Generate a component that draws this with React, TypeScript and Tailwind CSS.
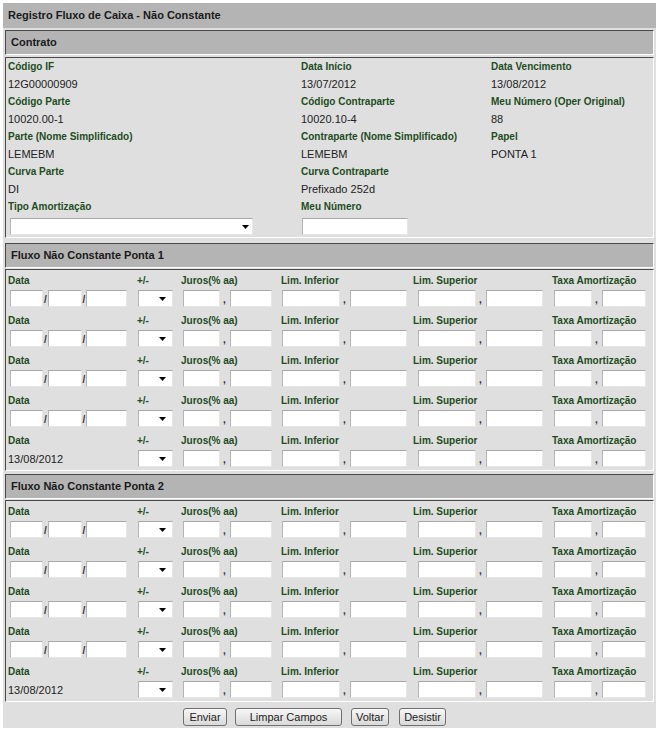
import type { ReactNode } from 'react'

// Registro Fluxo de Caixa - Não Constante (legacy form screen)

const contrato: [string, string][][] = [
  [
    ['Código IF', '12G00000909'],
    ['Data Início', '13/07/2012'],
    ['Data Vencimento', '13/08/2012'],
  ],
  [
    ['Código Parte', '10020.00-1'],
    ['Código Contraparte', '10020.10-4'],
    ['Meu Número (Oper Original)', '88'],
  ],
  [
    ['Parte (Nome Simplificado)', 'LEMEBM'],
    ['Contraparte (Nome Simplificado)', 'LEMEBM'],
    ['Papel', 'PONTA 1'],
  ],
  [
    ['Curva Parte', 'DI'],
    ['Curva Contraparte', 'Prefixado 252d'],
    ['', ''],
  ],
]

function SectionHeader({ children }: { children: ReactNode }) {
  return <div className={HEADER}>{children}</div>
}

function Field({ w }: { w: string }) {
  return <input type="text" className={`${INPUT} ${w}`} />
}

function Select({ w, pr }: { w: string; pr: string }) {
  return (
    <div className={`${INPUT} ${w} ${pr} flex items-center justify-end`}>
      <svg width="7" height="4" viewBox="0 0 7 4">
        <path d="M0 0h7L3.5 4z" fill="#000" />
      </svg>
    </div>
  )
}

function Comma() {
  return <span className={COMMA}>,</span>
}

function Slash({ w }: { w: string }) {
  return <span className={`${SLASH} ${w}`}>/</span>
}

function FluxRow({ last }: { last?: boolean }) {
  return (
    <div className="flex h-[40px] pt-[2px]">
      <div className="w-[129px]">
        <p className={LABEL}>Data</p>
        {last ? (
          <p className={`${VALUE} h-[17px] leading-[17px]`}>13/08/2012</p>
        ) : (
          <div className="ml-[2px] flex">
            <Field w="w-[33px]" />
            <Slash w="w-[5px]" />
            <Field w="w-[34px]" />
            <Slash w="w-[4px]" />
            <Field w="w-[41px]" />
          </div>
        )}
      </div>
      <div className="w-[44px]">
        <p className={LABEL}>+/-</p>
        <div className="ml-[1px]">
          <Select w="w-[35px]" pr="pr-[6px]" />
        </div>
      </div>
      <div className="w-[100px]">
        <p className={LABEL}>Juros(% aa)</p>
        <div className="ml-[2px] flex">
          <Field w="w-[37px]" />
          <Comma />
          <Field w="w-[42px]" />
        </div>
      </div>
      <div className="w-[132px]">
        <p className={LABEL}>Lim. Inferior</p>
        <div className="ml-[1px] flex">
          <Field w="w-[58px]" />
          <Comma />
          <Field w="w-[57px]" />
        </div>
      </div>
      <div className="w-[139px]">
        <p className={LABEL}>Lim. Superior</p>
        <div className="ml-[5px] flex">
          <Field w="w-[58px]" />
          <Comma />
          <Field w="w-[57px]" />
        </div>
      </div>
      <div className="flex-1">
        <p className={LABEL}>Taxa Amortização</p>
        <div className="ml-[2px] flex">
          <Field w="w-[38px]" />
          <Comma />
          <Field w="w-[44px]" />
        </div>
      </div>
    </div>
  )
}

function FluxBody() {
  return (
    <div className={`${BODY} h-[202px]`}>
      <FluxRow />
      <FluxRow />
      <FluxRow />
      <FluxRow />
      <FluxRow last />
    </div>
  )
}

export default function App() {
  return (
    <div className="min-h-screen bg-white pl-[3px] pt-[3px] font-['Liberation_Sans',Arial,sans-serif]">
      <div className="w-[653px] bg-[#dfdfdf] pb-[2px]">
        <div className="flex h-[25px] items-center bg-[#b4b4b4] pl-[5px] text-[11px] font-bold text-[#1a1a1a]">
          Registro Fluxo de Caixa - Não Constante
        </div>

        <div className="px-[2px] pt-[2px]">
          <SectionHeader>Contrato</SectionHeader>
          <div className={`${BODY} mt-[2px] h-[181px]`}>
            {contrato.map((row, i) => (
              <div key={i} className="flex">
                {row.map(([label, value], j) => (
                  <div key={j} className={COLS[j]}>
                    <p className={LABEL_C}>{label}</p>
                    <p className={VALUE}>{value}</p>
                  </div>
                ))}
              </div>
            ))}
            <div className="flex">
              <div className={COLS[0]}>
                <p className={LABEL_C}>Tipo Amortização</p>
                <div className="ml-[2px] mt-[3px]">
                  <Select w="w-[243px]" pr="pr-[3px]" />
                </div>
              </div>
              <div className={COLS[1]}>
                <p className={LABEL_C}>Meu Número</p>
                <div className="ml-[1px] mt-[3px]">
                  <Field w="w-[106px]" />
                </div>
              </div>
            </div>
          </div>

          <div className="mt-[5px]">
            <SectionHeader>Fluxo Não Constante Ponta 1</SectionHeader>
          </div>
          <div className="mt-[1px]">
            <FluxBody />
          </div>

          <div className="mt-[3px]">
            <SectionHeader>Fluxo Não Constante Ponta 2</SectionHeader>
          </div>
          <div className="mt-[1px]">
            <FluxBody />
          </div>
        </div>

        <div className="mt-[6px] flex pl-[180px]">
          <button type="button" className={`${BTN} w-[44px]`}>
            Enviar
          </button>
          <button type="button" className={`${BTN} ml-[8px] w-[107px]`}>
            Limpar Campos
          </button>
          <button type="button" className={`${BTN} ml-[9px] w-[38px]`}>
            Voltar
          </button>
          <button type="button" className={`${BTN} ml-[10px] w-[47px]`}>
            Desistir
          </button>
        </div>
      </div>
    </div>
  )
}

const HEADER =
  'flex h-[25px] items-center border border-t-[#4a4a4a] border-l-[#4a4a4a] border-r-white border-b-white bg-[#b4b4b4] pl-[5px] text-[11px] font-bold text-[#1a1a1a]'
const BODY =
  'border border-t-[#4a4a4a] border-l-[#4a4a4a] border-r-white border-b-white pl-[2px]'
const COLS = ['w-[293px]', 'w-[190px]', 'flex-1']
const LABEL_C = 'h-[17px] whitespace-nowrap text-[10px] font-bold leading-[17px] text-[#1d4d1d]'
const LABEL = 'h-[18px] whitespace-nowrap text-[10px] font-bold leading-[18px] text-[#1d4d1d]'
const VALUE = 'h-[18px] text-[11px] leading-[18px] text-[#222]'
const INPUT =
  'block h-[17px] border border-t-[#a8a8a8] border-l-[#b4b4b4] border-r-[#e6e6e6] border-b-[#e6e6e6] bg-white outline-none'
const COMMA = 'flex h-[17px] w-[10px] items-end pl-[3px] text-[10px] font-bold leading-[14px] text-[#333]'
const SLASH = 'flex h-[17px] items-end justify-center text-[10px] font-bold leading-[15px] text-[#333]'
const BTN =
  'h-[18px] rounded-[3px] border border-[#707070] bg-linear-to-b from-[#f7f7f7] to-[#d9d9d9] text-[11px] leading-[16px] text-[#222]'
